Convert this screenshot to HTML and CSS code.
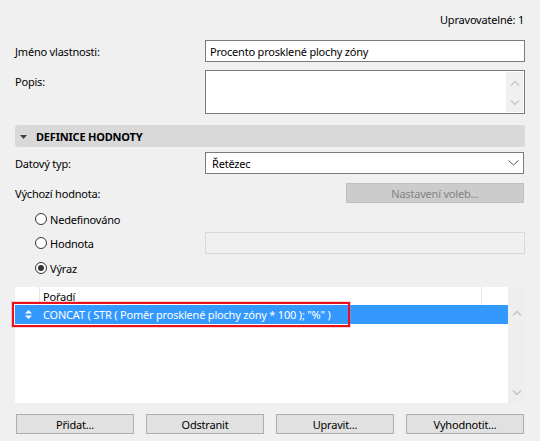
FILE: index.html
```html
<!DOCTYPE html>
<html lang="cs">
<head>
<meta charset="utf-8">
<link rel="stylesheet" href="styles.css">
</head>
<body>
<div class="panel">
  <div class="top">Upravovatelné: 1</div>

  <div class="row name-row">
    <div class="label">Jméno vlastnosti:</div>
    <div class="input">Procento prosklené plochy zóny</div>
  </div>

  <div class="row desc-row">
    <div class="label top-label">Popis:</div>
    <div class="textarea">
      <div class="ta-scroll">
        <svg width="10" height="6" viewBox="0 0 10 6"><path d="M1 5.5 L5 1.5 L9 5.5" fill="none" stroke="#c4c4c4" stroke-width="1.2"/></svg>
        <svg width="10" height="6" viewBox="0 0 10 6"><path d="M1 0.5 L5 4.5 L9 0.5" fill="none" stroke="#c4c4c4" stroke-width="1.2"/></svg>
      </div>
    </div>
  </div>

  <div class="section">
    <svg class="tri" width="7" height="4" viewBox="0 0 7 4"><path d="M0 0 H7 L3.5 4 Z" fill="#404040"/></svg>
    <span>DEFINICE HODNOTY</span>
  </div>

  <div class="row type-row">
    <div class="label">Datový typ:</div>
    <div class="select">
      <span>Řetězec</span>
      <svg width="11" height="6" viewBox="0 0 11 6"><path d="M0.5 0.5 L5.5 5 L10.5 0.5" fill="none" stroke="#505050" stroke-width="1"/></svg>
    </div>
  </div>

  <div class="row default-row">
    <div class="label">Výchozí hodnota:</div>
    <div class="btn-disabled">Nastavení voleb...</div>
  </div>

  <div class="radio-row r1">
    <span class="radio"></span><span>Nedefinováno</span>
  </div>
  <div class="radio-row r2">
    <div class="radio-left"><span class="radio"></span><span>Hodnota</span></div>
    <div class="input-disabled"></div>
  </div>
  <div class="radio-row r3">
    <span class="radio checked"></span><span>Výraz</span>
  </div>

  <div class="list">
    <div class="list-body">
      <div class="list-head">
        <div class="c1"></div>
        <div class="c2">Pořadí</div>
        <div class="c3"></div>
      </div>
      <div class="list-row selected">
        <div class="c1">
          <svg width="7" height="9" viewBox="0 0 7 9"><path d="M0 3.5 L3.5 0 L7 3.5 Z M0 5.5 L7 5.5 L3.5 9 Z" fill="#ffffff"/></svg>
        </div>
        <div class="c2">CONCAT ( STR ( Poměr prosklené plochy zóny * 100 ); "%" )</div>
      </div>
      <div class="highlight"></div>
    </div>
    <div class="list-scroll">
      <svg width="10" height="6" viewBox="0 0 10 6"><path d="M1 5.5 L5 1.5 L9 5.5" fill="none" stroke="#c4c4c4" stroke-width="1.4"/></svg>
      <svg width="10" height="6" viewBox="0 0 10 6"><path d="M1 0.5 L5 4.5 L9 0.5" fill="none" stroke="#c4c4c4" stroke-width="1.4"/></svg>
    </div>
  </div>

  <div class="buttons">
    <div class="btn">Přidat...</div>
    <div class="btn">Odstranit</div>
    <div class="btn">Upravit...</div>
    <div class="btn">Vyhodnotit...</div>
  </div>
</div>
</body>
</html>
```

FILE: styles.css
```css
* { box-sizing: border-box; }
html, body {
  margin: 0;
  padding: 0;
  background: #f0f0f0;
  width: 540px;
  height: 441px;
  overflow: hidden;
}
body {
  font-family: "Noto Sans", "Open Sans", sans-serif;
  font-size: 11px;
  letter-spacing: -0.2px;
  color: #000;
}
.panel {
  padding: 0 15px 0 15px;
  width: 540px;
}
.top {
  height: 40px;
  padding-bottom: 2px;
  display: flex;
  align-items: center;
  justify-content: flex-end;
  padding-right: 1px;
}
.row {
  display: flex;
  align-items: center;
}
.label {
  width: 190px;
  flex: none;
}
.name-row { height: 22px; }
.input {
  width: 320px;
  height: 22px;
  border: 1px solid #7a7a7a;
  background: #fff;
  padding-left: 4px;
  display: flex;
  align-items: center;
}
.desc-row {
  margin-top: 8px;
  align-items: flex-start;
}
.top-label { padding-top: 4px; }
.textarea {
  width: 320px;
  height: 44px;
  border: 1px solid #7a7a7a;
  background: #fff;
  display: flex;
  justify-content: flex-end;
  padding: 1px;
}
.ta-scroll {
  width: 17px;
  background: #f0f0f0;
  display: flex;
  flex-direction: column;
  justify-content: space-between;
  align-items: center;
  padding: 8px 0 6px;
}
.ta-scroll svg { display: block; }
.section {
  margin-top: 11px;
  height: 22px;
  background: #d9d9d9;
  border-radius: 3px;
  display: flex;
  align-items: center;
  padding-left: 5px;
  font-weight: bold;
  font-size: 11px;
}
.section .tri { margin-right: 9px; margin-top: 1px; }
.type-row {
  margin-top: 5px;
  height: 22px;
}
.select {
  width: 319px;
  height: 22px;
  border: 1px solid #7a7a7a;
  background: #fff;
  display: flex;
  align-items: center;
  justify-content: space-between;
  padding: 0 4px 0 6px;
}
.default-row {
  margin-top: 9px;
  height: 20px;
  justify-content: space-between;
}
.btn-disabled {
  width: 178px;
  height: 20px;
  margin-right: 1px;
  background: #cccccc;
  border: 1px solid #bfbfbf;
  color: #838383;
  display: flex;
  align-items: center;
  justify-content: center;
}
.radio-row {
  display: flex;
  align-items: center;
  height: 22px;
  padding-left: 20px;
}
.r1 { margin-top: 5px; }
.r2 { margin-top: 2px; justify-content: space-between; }
.r3 { margin-top: 3px; }
.radio-left { display: flex; align-items: center; }
.radio {
  width: 12px;
  height: 12px;
  border: 1px solid #333;
  border-radius: 50%;
  background: #fff;
  margin-right: 3px;
  position: relative;
  flex: none;
}
.radio.checked::after {
  content: "";
  position: absolute;
  left: 2px;
  top: 2px;
  width: 6px;
  height: 6px;
  border-radius: 50%;
  background: #333;
}
.input-disabled {
  width: 320px;
  height: 22px;
  border: 1px solid #d9d9d9;
  background: #f0f0f0;
}
.list {
  margin-top: 8px;
  height: 116px;
  display: flex;
}
.list-body {
  width: 493px;
  background: #fff;
  position: relative;
}
.list-head {
  display: flex;
  height: 18px;
  align-items: stretch;
}
.list-head .c1 { width: 25px; border-right: 1px solid #e5e5e5; }
.list-head .c2 { width: 442px; border-right: 1px solid #e5e5e5; padding-left: 3px; display: flex; align-items: center; }
.list-head .c3 { flex: 1; }
.list-row {
  height: 19px;
  display: flex;
  align-items: center;
}
.list-row.selected {
  background: #3399ff;
  color: #fff;
}
.list-row .c1 { width: 25px; display: flex; justify-content: center; padding-left: 1px; }
.list-row .c1 svg { display: block; }
.list-row .c2 { padding-left: 3px; white-space: nowrap; }
.highlight {
  position: absolute;
  left: -3px;
  top: 15px;
  width: 338px;
  height: 25px;
  border: 2px solid #e8101b;
  box-shadow: 0 0 0 1px rgba(240, 120, 130, 0.35);
}
.list-scroll {
  width: 17px;
  background: #eeeeee;
  display: flex;
  flex-direction: column;
  justify-content: space-between;
  align-items: center;
  padding: 23px 0 7px;
}
.list-scroll svg { display: block; }
.buttons {
  margin-top: 11px;
  display: flex;
  justify-content: space-between;
  padding: 0 1px;
}
.btn {
  width: 118px;
  height: 20px;
  background: #e1e1e1;
  border: 1px solid #adadad;
  display: flex;
  align-items: center;
  justify-content: center;
}
```
